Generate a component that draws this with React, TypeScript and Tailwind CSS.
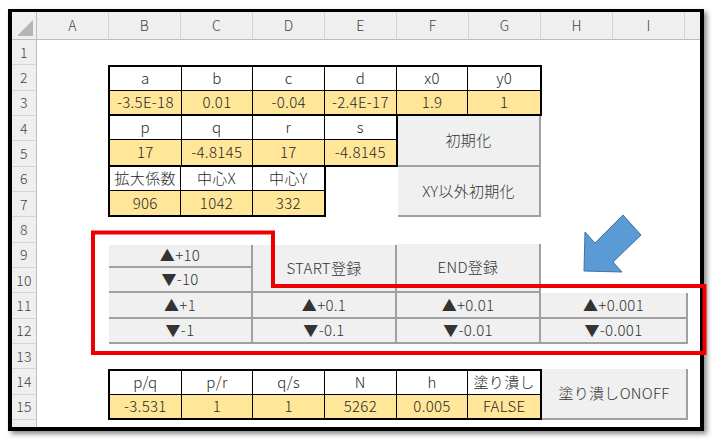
import React from 'react';

const COLS = ['A', 'B', 'C', 'D', 'E', 'F', 'G', 'H', 'I'];
const ROWS = Array.from({ length: 15 }, (_, i) => i + 1);

type Pair = [string, string];

function Block({ items, className }: { items: Pair[]; className: string }) {
  return (
    <div
      className={`grid grid-rows-2 border-black ${className}`}
      style={{ gridTemplateColumns: `repeat(${items.length}, minmax(0, 1fr))` }}
    >
      {items.map(([label], i) => (
        <div
          key={'l' + i}
          className={`flex items-center justify-center bg-white border-b border-black ${i < items.length - 1 ? 'border-r' : ''}`}
        >
          {label}
        </div>
      ))}
      {items.map(([, value], i) => (
        <div
          key={'v' + i}
          className={`flex items-center justify-center bg-[#ffe699] border-black ${i < items.length - 1 ? 'border-r' : ''}`}
        >
          {value}
        </div>
      ))}
    </div>
  );
}

function Btn({ children, className = '' }: { children: React.ReactNode; className?: string }) {
  return (
    <div
      className={`flex items-center justify-center bg-[#f0f0f0] border-r-2 border-b-2 border-[#a0a0a0] text-[#333] ${className}`}
    >
      {children}
    </div>
  );
}

export default function App() {
  return (
    <div className="relative w-[721px] h-[447px] bg-white pl-[8px] pt-[9px] font-['Noto_Sans_CJK_JP',sans-serif] font-light tracking-[0.3px] text-[15px] text-[#262626]">
      <div className="w-[696px] h-[422px] border-4 border-t-[3px] border-black shadow-[3px_3px_5px_rgba(0,0,0,0.45)] bg-white overflow-hidden">
        <div className="grid h-full grid-cols-[25px_repeat(9,72px)_1fr] grid-rows-[28px_repeat(15,25.33px)_1fr]">
          {/* corner */}
          <div className="col-start-1 row-start-1 relative bg-[#efefef] border-r border-b border-[#bdbdbd]">
            <svg className="absolute inset-0" width="24" height="27" viewBox="0 0 24 27">
              <polygon points="5,24 21,8 21,24" fill="#b5b5b5" />
            </svg>
          </div>
          {COLS.map((c, i) => (
            <div
              key={c}
              className="row-start-1 flex items-center justify-center bg-[#efefef] border-r border-r-[#d4d4d4] border-b border-b-[#bdbdbd] text-[14px] text-[#444]"
              style={{ gridColumnStart: i + 2 }}
            >
              {c}
            </div>
          ))}
          <div className="col-start-11 row-start-1 bg-[#efefef] border-b border-[#bdbdbd]" />
          {ROWS.map((r) => (
            <div
              key={r}
              className="col-start-1 flex items-center justify-center bg-[#efefef] border-r border-r-[#bdbdbd] border-b border-b-[#d4d4d4] text-[14px] text-[#444]"
              style={{ gridRowStart: r + 1 }}
            >
              {r}
            </div>
          ))}
          <div className="col-start-1 row-start-17 bg-[#efefef] border-r border-[#bdbdbd]" />

          {/* parameter tables */}
          <Block
            className="col-start-3 col-span-6 row-start-3 row-span-2 border-2 -mx-px"
            items={[
              ['a', '-3.5E-18'],
              ['b', '0.01'],
              ['c', '-0.04'],
              ['d', '-2.4E-17'],
              ['x0', '1.9'],
              ['y0', '1'],
            ]}
          />
          <Block
            className="col-start-3 col-span-4 row-start-5 row-span-2 border-x-2 border-b-2 -mx-px"
            items={[
              ['p', '17'],
              ['q', '-4.8145'],
              ['r', '17'],
              ['s', '-4.8145'],
            ]}
          />
          <Block
            className="col-start-3 col-span-3 row-start-7 row-span-2 border-x-2 border-b-2 -mx-px"
            items={[
              ['拡大係数', '906'],
              ['中心X', '1042'],
              ['中心Y', '332'],
            ]}
          />
          <Btn className="col-start-7 col-span-2 row-start-5 row-span-2 ml-px">初期化</Btn>
          <Btn className="col-start-7 col-span-2 row-start-7 row-span-2 ml-px">XY以外初期化</Btn>

          {/* step buttons */}
          <Btn className="col-start-3 col-span-2 row-start-10 mt-[2px]">▲+10</Btn>
          <Btn className="col-start-3 col-span-2 row-start-11">▼-10</Btn>
          <Btn className="col-start-5 col-span-2 row-start-10 row-span-2 mt-[2px]">START登録</Btn>
          <Btn className="col-start-7 col-span-2 row-start-10 row-span-2 mt-px">END登録</Btn>
          <Btn className="col-start-3 col-span-2 row-start-12">▲+1</Btn>
          <Btn className="col-start-5 col-span-2 row-start-12">▲+0.1</Btn>
          <Btn className="col-start-7 col-span-2 row-start-12">▲+0.01</Btn>
          <Btn className="col-start-9 col-span-2 row-start-12 -mr-[3px]">▲+0.001</Btn>
          <Btn className="col-start-3 col-span-2 row-start-13">▼-1</Btn>
          <Btn className="col-start-5 col-span-2 row-start-13">▼-0.1</Btn>
          <Btn className="col-start-7 col-span-2 row-start-13">▼-0.01</Btn>
          <Btn className="col-start-9 col-span-2 row-start-13 -mr-[3px]">▼-0.001</Btn>

          {/* ratio table */}
          <Block
            className="col-start-3 col-span-6 row-start-15 row-span-2 border-2 -mx-px"
            items={[
              ['p/q', '-3.531'],
              ['p/r', '1'],
              ['q/s', '1'],
              ['N', '5262'],
              ['h', '0.005'],
              ['塗り潰し', 'FALSE'],
            ]}
          />
          <Btn className="col-start-9 col-span-2 row-start-15 row-span-2 ml-px -mr-[3px]">塗り潰しONOFF</Btn>
        </div>
      </div>

      {/* annotations */}
      <svg className="absolute left-0 top-0 pointer-events-none" width="721" height="447" viewBox="0 0 721 447">
        <polygon
          points="93,232.5 273,232.5 273,286 704.5,286 704.5,353 93,353"
          fill="none"
          stroke="#ee0000"
          strokeWidth="4"
        />
        <polygon
          points="623,215 641,235 613,262 622,272 584,271 585,232 595,243"
          fill="#5b9bd5"
          stroke="#41719c"
          strokeWidth="1"
        />
      </svg>
    </div>
  );
}
